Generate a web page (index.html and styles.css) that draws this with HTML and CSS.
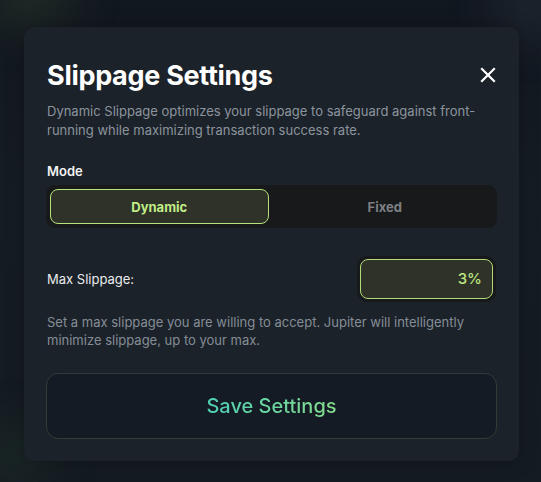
FILE: index.html
```html
<!DOCTYPE html>
<html>
<head>
<meta charset="utf-8">
<link rel="stylesheet" href="styles.css">
</head>
<body>
<div class="backdrop">
  <div class="glow glow-a"></div>
  <div class="glow glow-b"></div>
  <div class="glow glow-c"></div>
  <div class="modal">
    <div class="header">
      <h1 class="title">Slippage Settings</h1>
      <button class="close" aria-label="Close">
        <svg width="16" height="16" viewBox="0 0 16 16"><path d="M2 2L14 14M14 2L2 14" stroke="#ffffff" stroke-width="2.2" stroke-linecap="square"/></svg>
      </button>
    </div>
    <p class="desc">Dynamic Slippage optimizes your slippage to safeguard against front-running while maximizing transaction success rate.</p>
    <div class="label">Mode</div>
    <div class="toggle">
      <div class="opt active">Dynamic</div>
      <div class="opt">Fixed</div>
    </div>
    <div class="row">
      <span class="row-label">Max Slippage:</span>
      <div class="input-wrap"><div class="input">3%</div></div>
    </div>
    <p class="help">Set a max slippage you are willing to accept. Jupiter will intelligently minimize slippage, up to your max.</p>
    <button class="save"><span class="save-text">Save Settings</span></button>
  </div>
</div>
</body>
</html>
```
FILE: styles.css
```css
* { box-sizing: border-box; }
html, body { margin: 0; padding: 0; }
body {
  width: 541px;
  height: 482px;
  overflow: hidden;
  background: #131a22;
  font-family: Inter, "Noto Sans", sans-serif;
}
.backdrop {
  position: relative;
  width: 541px;
  height: 482px;
  padding: 27px 22px 0 24px;
  background: linear-gradient(180deg, #121820 0%, #151c24 40%, #141b22 100%);
}
.glow {
  position: absolute;
  border-radius: 50%;
  filter: blur(25px);
}
.glow-a { left: -10px; top: -20px; width: 80px; height: 40px; background: rgba(70, 90, 50, 0.45); }
.glow-b { left: -20px; top: 430px; width: 70px; height: 50px; background: rgba(50, 75, 50, 0.35); }
.glow-c { left: 500px; top: -15px; width: 60px; height: 45px; background: rgba(60, 70, 80, 0.5); }
.modal {
  position: relative;
  width: 495px;
  height: 434px;
  background: #1c2229;
  border-radius: 10px;
  padding: 29px 22px 0 22px;
  box-shadow: 0 0 20px rgba(0,0,0,0.25);
}
.header {
  display: flex;
  justify-content: space-between;
  align-items: center;
  height: 38px;
}
.title {
  margin: 0 0 0 1px;
  color: #ffffff;
  font-size: 27px;
  font-weight: 700;
  letter-spacing: -0.3px;
}
.close {
  background: none;
  border: 0;
  padding: 0;
  margin-right: 1px;
  width: 16px;
  height: 16px;
  display: flex;
}
.desc {
  margin: 8px 0 0 1px;
  color: #8b949e;
  font-size: 13px;
  line-height: 19px;
}
.label {
  margin: 23px 0 0 1px;
  color: #f2f3f4;
  font-size: 13px;
  font-weight: 600;
  line-height: 16px;
}
.toggle {
  margin-top: 6px;
  display: flex;
  gap: 8px;
  background: #18191b;
  border-radius: 9px;
  padding: 4px;
  height: 43px;
  width: 451px;
}
.opt {
  flex: 1;
  display: flex;
  align-items: center;
  justify-content: center;
  color: #7d7f82;
  font-size: 13px;
  font-weight: 700;
  border-radius: 8px;
}
.opt.active {
  background: #2e3229;
  border: 1.5px solid #b6e27a;
  color: #c1ec86;
}
.row {
  margin-top: 27px;
  display: flex;
  justify-content: space-between;
  align-items: center;
  height: 48px;
}
.row-label {
  color: #e9ebed;
  font-size: 13px;
  margin-left: 1px;
}
.input-wrap {
  background: #17191b;
  border-radius: 10px;
  padding: 3px;
  margin-right: 1px;
}
.input {
  width: 133px;
  height: 40px;
  background: #2e3229;
  border: 1.5px solid #b2da78;
  border-radius: 8px;
  color: #bde57f;
  font-size: 15px;
  font-weight: 500;
  text-align: right;
  padding: 0 10px;
  line-height: 37px;
}
.help {
  margin: 10px 0 0 1px;
  color: #848d97;
  font-size: 13px;
  line-height: 18px;
}
.save {
  margin-top: 24px;
  width: 451px;
  height: 66px;
  background: #141b25;
  border: 1px solid #2f3d35;
  border-radius: 12px;
  display: flex;
  align-items: center;
  justify-content: center;
  font-family: Inter, "Noto Sans", sans-serif;
}
.save-text {
  font-size: 20px;
  font-weight: 500;
  background: linear-gradient(90deg, #4fd1b4 0%, #86dc8c 100%);
  -webkit-background-clip: text;
  background-clip: text;
  color: transparent;
}
```
